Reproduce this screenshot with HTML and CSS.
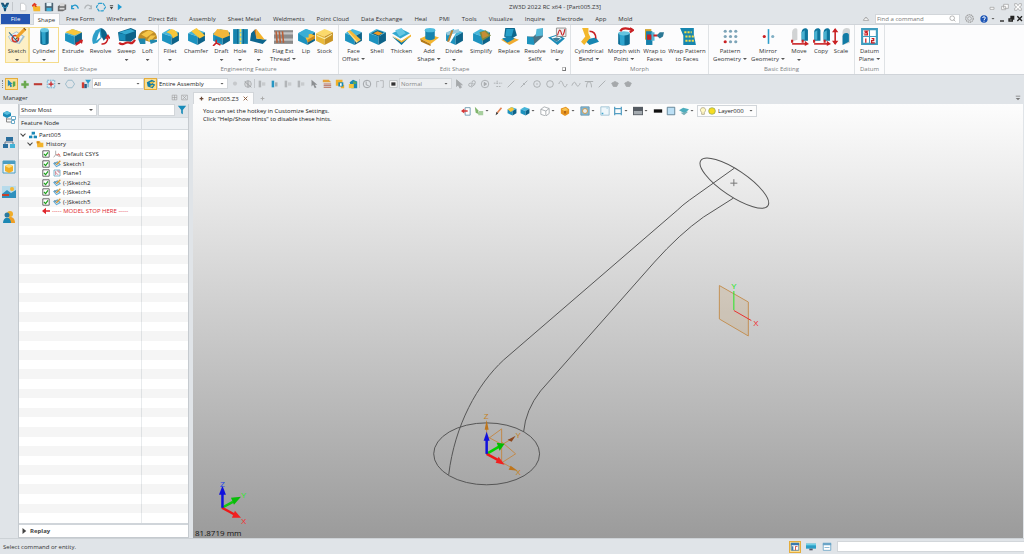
FILE: index.html
```html
<!DOCTYPE html>
<html lang="en">
<head>
<meta charset="utf-8">
<title>ZW3D 2022 RC x64 - [Part005.Z3]</title>
<link rel="stylesheet" href="styles.css">
</head>
<body>
<svg class="defs" aria-hidden="true">
  <symbol id="cube" viewBox="0 0 18 18"><path fill="#45b6da" d="M1 6 8 2l9 3-7 4z"/><path fill="#1c92bf" d="M1 6l9 3v8l-9-4z"/><path fill="#0d6389" d="M10 9l7-4v8l-7 4z"/></symbol>
  <symbol id="cursor" viewBox="0 0 12 12"><path d="M3 1v8l2-2 2 4 2-1-2-3h3z"/></symbol>
  <symbol id="check" viewBox="0 0 10 10"><path fill="#fff" stroke="#444" d="M1 1h8v8H1z"/><path fill="none" stroke="#1ba01b" stroke-width="1.500" d="M2.500 5l2 2 3-4"/></symbol>
  <symbol id="sk" viewBox="0 0 12 12"><path fill="#5fa9d4" d="M0 5l7-3 5 5-7 4z"/><path fill="#dceaf2" d="M3 6l4-2 2 3-4 2z"/><path stroke="#d99a35" stroke-width="2" d="M5 7l6-6"/><path stroke="#777" d="M2 3l3 4"/></symbol>
  <symbol id="block" viewBox="0 0 12 12"><path fill="#b2b5b8" d="M2 2h3v8H2z"/><path fill="#c8cbce" d="M6 4h4v4H6z"/></symbol>
</svg>

<header class="titlebar">
  <div class="quick">
    <button aria-label="Application"><svg viewBox="0 0 12 12"><path fill="#174f74" d="M1 1h3l2 3 2-3h3L9 6H3zM4 6h4l-1 5H5z"/><path fill="#2fa2ce" d="M2 2l3 4h2l3-4-2 5H4z"/></svg></button>
    <i class="sep"></i>
    <button aria-label="New"><svg viewBox="0 0 12 12"><path fill="#fff" stroke="#c3c7ca" d="M3 1.500h4l2.500 3v6H3z"/></svg></button>
    <button aria-label="Open"><svg viewBox="0 0 12 12"><path fill="#f5b82c" d="M2 4h4l1 1h4v6H3z"/><path fill="#e03a24" d="M1 4l3-3 3 2-1 1 1 2H5L4 4 2 6z"/></svg></button>
    <button aria-label="Save"><svg viewBox="0 0 12 12"><path fill="#4d6474" d="M1 1h10v10H1z"/><path fill="#e7f4fa" d="M3 1h6v4H3z"/><path fill="#41b2da" d="M3 7h6v4H3z"/></svg></button>
    <button aria-label="Print"><svg viewBox="0 0 12 12"><path fill="#6d6d6d" d="M1 5l3-2h7v6l-4 2H1z"/><path fill="#d9d9d9" d="M4 1h5v4H3zM3 7h6v2H3z"/></svg></button>
    <button aria-label="Undo"><svg viewBox="0 0 12 12"><path fill="none" stroke="#2498cc" stroke-width="1.500" d="M2 4v4h3M2 7c2-5 7-4 8 1"/></svg></button>
    <button aria-label="Redo"><svg viewBox="0 0 12 12"><path fill="none" stroke="#b3b7ba" stroke-width="1.500" d="M10 4v4H7M10 7C8 2 3 3 2 8"/></svg></button>
    <button aria-label="Regenerate"><svg viewBox="0 0 12 12"><path fill="none" stroke="#2e9fce" stroke-width="1.500" stroke-dasharray="4 1" d="M3.500 1.500h5l3 4.500-3 4.500h-5L.5 6z"/></svg></button>
    <button class="narrow" aria-label="Customize"><svg viewBox="0 0 6 12"><path fill="#444" d="M1 4h4v1H1zM1 6h4L3 9z"/></svg></button>
    <button class="narrow" aria-label="Play"><svg viewBox="0 0 6 12"><path fill="#1c9bd3" d="M1 2l5 4-5 4z"/></svg></button>
  </div>
  <h1 class="title">ZW3D 2022 RC x64 - [Part005.Z3]</h1>
  <div class="window">
    <button aria-label="Minimize"><svg viewBox="0 0 12 12"><path fill="#fff" stroke="#999" d="M3 6.500h6v3H3z"/></svg></button>
    <button aria-label="Restore"><svg viewBox="0 0 12 12"><path fill="#fff" stroke="#999" d="M4 2h7v6H4zM1 5h6v5H1z"/></svg></button>
    <button aria-label="Close"><svg viewBox="0 0 12 12"><path fill="#fff" stroke="#999" d="M1 1h3l2 3 2-3h3v3L8 6l3 2v3H8L6 8l-2 3H1V8l3-2-3-2z"/></svg></button>
  </div>
</header>

<nav class="tabs">
  <button class="file">File</button>
  <button class="active">Shape</button>
  <button>Free Form</button><button>Wireframe</button><button>Direct Edit</button><button>Assembly</button><button>Sheet Metal</button><button>Weldments</button><button>Point Cloud</button><button>Data Exchange</button><button>Heal</button><button>PMI</button><button>Tools</button><button>Visualize</button><button>Inquire</button><button>Electrode</button><button>App</button><button>Mold</button>
  <div class="finder">
    <button class="icon up" aria-label="Collapse ribbon"><svg viewBox="0 0 12 12"><path fill="#fff" stroke="#888" d="M2 8h8L8 5H7L6 3 5 5H4z"/></svg></button>
    <label class="search"><input type="text" placeholder="Find a command" aria-label="Find a command"><svg viewBox="0 0 12 12"><circle cx="5.500" cy="5.500" r="4" fill="none" stroke="#888"/><path stroke="#888" d="M8 8l3 3"/></svg></label>
    <button class="icon gear" aria-label="Settings"><svg viewBox="0 0 12 12"><circle cx="6" cy="6" r="5" fill="none" stroke="#999" stroke-width="1.500" stroke-dasharray="2 .7"/><circle cx="6" cy="6" r="2.500" fill="none" stroke="#999"/></svg></button>
    <button class="icon help" aria-label="Help"><svg viewBox="0 0 12 12"><circle cx="6" cy="6" r="5.500" fill="#1d55b5"/><path fill="none" stroke="#fff" stroke-width="1.500" d="M4 4.500c0-2.500 4-2.500 4 0C8 6 6 6 6 7.500M6 8.500v1.500"/></svg></button>
    <i class="caret"></i>
    <button class="icon" aria-label="Minimize document"><svg viewBox="0 0 12 12"><path fill="#222" d="M3 8h6v2H3z"/></svg></button>
    <button class="icon" aria-label="Restore document"><svg viewBox="0 0 12 12"><path fill="#222" d="M5 1h6v6H9v3H2V5h3zM4 7v1h3V7z" fill-rule="evenodd"/></svg></button>
    <button class="icon" aria-label="Close document"><svg viewBox="0 0 12 12"><path stroke="#222" stroke-width="2" d="M2 2l7 7M9 2L2 9"/></svg></button>
  </div>
</nav>

<main class="ribbon">
  <section class="group basic"><div class="tools">
    <button class="hot"><svg viewBox="0 0 18 18"><path fill="#9fbfd4" d="M0 9l8-5 8 5-5 7-8-2z"/><path fill="#eef4f8" d="M1 9l7-4 6 4-4 6-7-2z"/><circle cx="7" cy="11" r="3" fill="none" stroke="#d83a2b" stroke-width="1.500"/><path stroke="#2c6c94" d="M1 5l8 9"/><path stroke="#f0a32a" stroke-width="3" d="M8 10l8-8"/><path stroke="#7a4d16" d="M7 12l2-2M15 1l2 2"/></svg>Sketch<i class="caret"></i></button>
    <button class="warm"><svg viewBox="0 0 18 18"><path fill="#0e6d94" d="M5 3h8v12a4 2 0 0 1-8 0z"/><path fill="#2ea3cb" d="M6 3h4v13H7z"/><ellipse cx="9" cy="3" rx="4" ry="2" fill="#62c5e3"/></svg>Cylinder<i class="caret"></i></button>
    <button><svg viewBox="0 0 18 18"><use href="#cube"/><path fill="#f8c63a" d="M1 5l7-3 9 3-7 3z"/><path fill="#c92023" d="M11 15l4-2-1-1 4 0-1 4-1-1-5 3z"/></svg>Extrude</button>
    <button><svg viewBox="0 0 18 18"><path fill="#2e9fc9" d="M5 3l4-2 2 8-5 6-4 1c-2-4 0-10 3-13z"/><path fill="#0c648a" d="M9 1c5 1 7 6 6 9l-3 3-2-4z"/><path fill="#fff" d="M8 4l1 6-4 3z"/><path fill="none" stroke="#c92023" stroke-width="1.500" d="M10 16c4 1 6-3 6-6M14 11l2-3 2 3"/></svg>Revolve</button>
    <button><svg viewBox="0 0 18 18"><path fill="#0c6288" d="M1 5l12-4 5 2v7l-5 4-11-1z"/><path fill="#35a9d0" d="M2 5l11-3 4 2-9 3z"/><path fill="#198cb9" d="M2 6l6 1v6l-6-1z"/><path fill="none" stroke="#c92023" stroke-width="2" d="M2 15c5 4 5-2 10 0 2 1 4-1 5-3"/></svg>Sweep<i class="caret"></i></button>
    <button><svg viewBox="0 0 18 18"><path fill="#c08d27" d="M0 11c1-7 6-9 12-8 4 1 6 4 6 8l-7 3z"/><path fill="#f4c446" d="M3 7l7-4 5 2-7 5zM9 12l3-4 5 0-6 6z"/><path fill="#2088ad" d="M0 11h7v5H2zM11 12h7v2l-6 2z"/></svg>Loft<i class="caret"></i></button>
  </div><h2>Basic Shape</h2></section>

  <section class="group engineering"><div class="tools">
    <button><svg viewBox="0 0 18 18"><use href="#cube"/><path fill="#f8c63a" d="M5 5l5-3c4 1 6 3 6 6l-5 3c0-3-2-5-6-6z"/></svg>Fillet<i class="caret"></i></button>
    <button><svg viewBox="0 0 18 18"><use href="#cube"/><path fill="#f8c63a" d="M4 4l5-3 8 7-5 3z"/></svg>Chamfer</button>
    <button><svg viewBox="0 0 18 18"><use href="#cube"/><path fill="#f3b63b" d="M1 7l4-5 10 1 2 5-7 3z"/><path fill="#1a83ad" d="M3 9l6 2v3l-6-2z"/><path fill="none" stroke="#c92023" stroke-width="1.500" d="M4 12v3l-3 3M4 15l4 2"/></svg>Draft<i class="caret"></i></button>
    <button><svg viewBox="0 0 18 18"><path fill="#1684af" d="M2 2h14v14H2z"/><path fill="#53b9d9" d="M7 2h4v14H7z"/><path stroke="#f8dc54" stroke-width="1.500" d="M9 2v14" stroke-dasharray="3 1"/><path stroke="#0c5e82" d="M6.500 2v14M11.500 2v14"/></svg>Hole<i class="caret"></i></button>
    <button><svg viewBox="0 0 18 18"><path fill="#0d668e" d="M2 6l4-4 1 9 10 1-4 4-12-3z"/><path fill="#f4b22a" d="M7 2l8 10-8-1z"/><path fill="#d17a19" d="M5 3l2-1v9z"/></svg>Rib<i class="caret"></i></button>
    <button><svg viewBox="0 0 18 18"><path fill="#8b8b8b" d="M0 3h18v13H0z"/><path stroke="#c4c4c4" stroke-width="2" d="M0 6h18M0 12h18"/><path stroke="#b96038" stroke-width="1.500" d="M2 4l1 11M5 4l1 11M8 4l1 11"/></svg>Flag Ext<span>Thread<i class="caret"></i></span></button>
    <button><svg viewBox="0 0 18 18"><use href="#cube"/><path fill="#f8bf39" d="M7 8l5-2 5 2v3l-7 3z"/><path fill="#c98a20" d="M10 12l7-4v3l-7 4z"/><path fill="#39aed5" d="M1 6l8-4 8 3-6 2v3H7z"/></svg>Lip</button>
    <button><svg viewBox="0 0 18 18"><path fill="#fbd96b" d="M1 6l8-4 8 3-8 4z"/><path fill="#e9b93a" d="M1 6l8 3v8l-8-4z"/><path fill="#c99424" d="M9 9l8-4v8l-8 4z"/><path fill="none" stroke="#f8edae" d="M2 8l7 3 7-4"/></svg>Stock</button>
  </div><h2>Engineering Feature</h2></section>

  <section class="group edit"><div class="tools">
    <button><svg viewBox="0 0 18 18"><use href="#cube"/><path fill="#f4b938" d="M3 4l3-1 10 9-4 3z"/><path fill="#ffe191" d="M3 4l1 0 9 10-1 1z"/></svg>Face<span>Offset<i class="caret"></i></span></button>
    <button><svg viewBox="0 0 18 18"><use href="#cube"/><path fill="#0b5f85" d="M3 6l6-3 6 2-5 4z"/><path fill="#ef9b22" d="M5 6l4-2 5 2-4 2z"/></svg>Shell</button>
    <button><svg viewBox="0 0 18 18"><path fill="#0c759f" d="M0 9l9 5 9-6-9 9z"/><path fill="#f6b52e" d="M0 8l9 5 9-6v2l-9 6z"/><path fill="#33a8cf" d="M0 6l9-4 8 4-9 5z"/><path fill="#65c6e3" d="M3 3l6-2 4 5-6 3z"/></svg>Thicken</button>
    <button><svg viewBox="0 0 18 18"><path fill="#f4b52f" d="M0 11l9-4 9 3-8 6z"/><path fill="#b57a16" d="M0 11l10 5v2L1 14z"/><path fill="#1683ae" d="M5 2h9v9c-2 2-7 2-9 0z"/><ellipse cx="9.500" cy="3" rx="5" ry="2" fill="#4ebbdd"/></svg>Add<span>Shape<i class="caret"></i></span></button>
    <button><svg viewBox="0 0 18 18"><use href="#cube"/><path fill="#fff" d="M9 2l3 1-7 12-2-1z"/><path fill="#96c9dd" d="M1 5l12-3 1 3-12 3z"/><path fill="#c08534" d="M6 3h2L4 14H2z"/></svg>Divide<i class="caret"></i></button>
    <button><svg viewBox="0 0 18 18"><use href="#cube"/><path fill="#7b8c42" d="M7 5l6-2 5 5-8 5z"/><path fill="#c58d35" d="M9 5l3-1 4 4-6 3z"/></svg>Simplify</button>
    <button><svg viewBox="0 0 18 18"><path fill="#f0ac31" d="M1 12l8-3 9 3-9 5z"/><path fill="#0e678c" d="M5 1h9l2 7-7 4-5-3z"/><path fill="#279fc9" d="M6 2h7l-2 7H5z"/><path fill="#1684af" d="M2 11l7-2 5 2-7 4z"/></svg>Replace</button>
    <button><svg viewBox="0 0 18 18"><path fill="#4a7284" d="M1 9h6l9-8v8l-8 7H1z"/><path fill="#1d94bf" d="M1 9l6 1 1 7-7-1z"/><path fill="#54b8d8" d="M10 2l6-1v7l-7 1z"/></svg>Resolve<span>SelfX</span></button>
    <button><svg viewBox="0 0 18 18"><path fill="#1b8bb7" d="M0 10l9-3 7 4-7 6z"/><path fill="#fff" d="M3 10l6-2 4 3-5 3z"/><path fill="#3d7e99" d="M4 11l4 3 4-3-4-1z"/><path fill="#eee" stroke="#777" stroke-width=".7" d="M8 1h9v8H8z"/><path fill="none" stroke="#c92023" d="M9 8c2-8 3-5 4-1 1 2 2 0 3-5"/></svg>Inlay<i class="caret"></i></button>
  </div><h2>Edit Shape</h2><i class="launch"></i></section>

  <section class="group morph"><div class="tools">
    <button><svg viewBox="0 0 18 18"><path fill="#1686b2" d="M4 12l11-2 3 4-9 3z"/><path fill="#f3b72c" d="M2 1h6v5l2 4-6 7-3-3 4-5z"/><path fill="none" stroke="#c92023" stroke-width="1.500" d="M9 4c4 0 6 3 6 7"/></svg>Cylindrical<span>Bend <i class="caret"></i></span></button>
    <button><svg viewBox="0 0 18 18"><path fill="#0d6d95" d="M3 6h11v10c-3 2-8 2-11 0z"/><path fill="#2fa5cf" d="M4 6h5v11H5z"/><ellipse cx="8.500" cy="6" rx="5.500" ry="2" fill="#64c4df"/><path fill="none" stroke="#c92023" stroke-width="2" d="M5 4c2-4 7-3 12-1M14 1l3 2-3 2"/></svg>Morph with<span>Point <i class="caret"></i></span></button>
    <button><svg viewBox="0 0 18 18"><path fill="#d0a32c" d="M0 2h6v10H0z"/><path fill="#1580ab" d="M1 4h6v13H1z"/><path fill="#55b6d5" d="M6 5h3v8H6z"/><path fill="#c92023" d="M2 7h4v5H2zM8 7h4v2H8z"/><path fill="#2b7895" d="M11 8l3-3h4l-1 4-3 2z"/></svg>Wrap to<span>Faces</span></button>
    <button><svg viewBox="0 0 18 18"><path fill="#1686af" d="M2 1h13v6l2 10H5V8z"/><path stroke="#f2dc4a" stroke-width="2" stroke-dasharray="2 1" d="M6 5h7M7 9h8M7 13h8"/></svg>Wrap Pattern<span>to Faces</span></button>
  </div><h2>Morph</h2></section>

  <section class="group editing"><div class="tools">
    <button><svg viewBox="0 0 18 18"><g fill="#7da4b8"><circle cx="4" cy="4" r="1.500"/><circle cx="9" cy="4" r="1.500"/><circle cx="14" cy="4" r="1.500"/><circle cx="4" cy="9" r="1.500"/><circle cx="9" cy="9" r="1.500"/><circle cx="14" cy="9" r="1.500"/><circle cx="9" cy="14" r="1.500"/><circle cx="14" cy="14" r="1.500"/></g><circle cx="4" cy="14" r="1.500" fill="#c92023"/></svg>Pattern<span>Geometry<i class="caret"></i></span></button>
    <button><svg viewBox="0 0 18 18"><path stroke="#2d9cca" stroke-width="1.500" d="M9 2v14"/><circle cx="5" cy="9" r="1.500" fill="#c92023"/><circle cx="13" cy="9" r="1.500" fill="#80afc4"/></svg>Mirror<span>Geometry<i class="caret"></i></span></button>
    <button><svg viewBox="0 0 18 18"><path fill="#d1d3d4" d="M2 5c0-4 5-5 5-2v9l-5 2z"/><path fill="#0e759d" d="M11 5c0-4 5-5 6-2v10h-6z"/><path fill="#49b0d0" d="M11 5l3-2v9h-3z"/><path stroke="#c92023" stroke-width="1.500" d="M2 16h13"/><path fill="#c92023" d="M14 13l4 3-4 2zM1 12h2v3H1zM11 12h2v3h-2z"/></svg>Move<i class="caret"></i></button>
    <button><svg viewBox="0 0 18 18"><path fill="#0e759d" d="M2 5c0-4 5-5 6-2v10H2zM11 5c0-4 5-5 6-2v10h-6z"/><path fill="#49b0d0" d="M2 5l3-2v9H2zM11 5l3-2v9h-3z"/><path stroke="#c92023" stroke-width="1.500" d="M2 16h13"/><path fill="#c92023" d="M14 13l4 3-4 2zM1 12h2v3H1zM11 12h2v3h-2z"/></svg>Copy</button>
    <button><svg viewBox="0 0 18 18"><path stroke="#c92023" stroke-width="1.500" d="M3 2v14"/><path fill="#c92023" d="M0 5l3-4 3 4zM0 13l3 4 3-4z"/><path fill="#d2d4d5" d="M10 5c0-5 7-5 7-2v12l-7 2z"/><path fill="#117ba5" d="M10 9c0-4 5-4 6-2v7l-6 3z"/></svg>Scale</button>
  </div><h2>Basic Editing</h2></section>

  <section class="group datum"><div class="tools">
    <button><svg viewBox="0 0 18 18"><path fill="#fff" stroke="#3f9cbf" stroke-width="2" d="M2 2h14v14H2z"/><path fill="none" stroke="#3f9cbf" d="M9 2v7h7M9 9H2M9 9v7"/><path fill="none" stroke="#c92023" stroke-width="1.200" d="M4 4h3L5 5.500h2v2H4M5.500 11v4M11 11h2v2h-2v2h3"/></svg>Datum<span>Plane<i class="caret"></i></span></button>
  </div><h2>Datum</h2></section>
</main>

<div class="selectbar">
  <i class="grip"></i>
  <button class="on" aria-label="Pick"><svg viewBox="0 0 12 12"><path fill="#2588b5" d="M1 1v8l2-2 1 3 2-1-1-3h2z"/><path fill="#58a84c" d="M7 3h3v5l-3 2z"/></svg></button>
  <button aria-label="Add"><svg viewBox="0 0 12 12"><path fill="#6aa84f" d="M4.500 2h3v3h3v3h-3v3h-3V8h-3V5h3z"/></svg></button>
  <button aria-label="Remove"><svg viewBox="0 0 12 12"><path fill="#bd3a33" d="M1 5h10v2.500H1z"/></svg></button>
  <button aria-label="Window pick"><svg viewBox="0 0 12 12"><path fill="#d7ebf5" stroke="#5da5c8" stroke-dasharray="2 1" d="M1.500 1.500h9v9h-9z"/><path stroke="#c92023" stroke-width="1.500" d="M6 3v6M3 6h6"/></svg></button>
  <i class="caret"></i>
  <button class="hexa" aria-label="Polygon pick"><svg viewBox="0 0 12 12"><path fill="none" stroke="#93b6c7" d="M3.500 1.500h5l3 4.500-3 4.500h-5L.5 6z"/></svg></button>
  <button aria-label="Filter"><svg viewBox="0 0 12 12"><path fill="#d53b30" d="M1 4h3v7H1z"/><path fill="#2d5c84" d="M4 6h3v5H4z"/><path fill="#2a9bc9" d="M5 1h7L9 5v5H8V5z"/></svg></button>
  <span class="pick all"><select aria-label="Entity filter"><option>All</option></select></span>
  <button class="on" aria-label="Assembly scope"><svg viewBox="0 0 12 12"><path fill="#147ea9" d="M1 4l6-3 4 2-3 2 3 2-3 4-6-2z"/><path fill="#f5c23e" d="M4 4l4-1 2 1-4 2zM5 8l3-1 1 1-3 2z"/></svg></button>
  <span class="pick scope"><select aria-label="Scope"><option>Entire Assembly</option></select></span>
  <button aria-label="Pick last"><svg viewBox="0 0 12 12"><circle cx="6" cy="5.500" r="2.500" fill="#c6c9cc"/></svg></button>
  <button aria-label="Hide pick"><svg viewBox="0 0 12 12"><circle cx="6" cy="6" r="4" fill="#d5d7d9" stroke="#a9adb0"/><path stroke="#989b9e" d="M2 3l8 7M6 2v8"/></svg></button>
  <i class="sep"></i>
  <button aria-label="Align 1"><svg><use href="#block"/></svg></button>
  <button aria-label="Align 2"><svg viewBox="0 0 12 12"><path fill="#2796c3" d="M2 2h3v8H2z"/><path fill="#aab0b4" d="M6 4h3v5H6z"/></svg></button>
  <button aria-label="Align 3"><svg><use href="#block"/></svg></button>
  <button aria-label="Align 4"><svg><use href="#block"/></svg></button>
  <button aria-label="Cursor"><svg fill="#8b8e91"><use href="#cursor"/></svg></button>
  <button aria-label="List"><svg viewBox="0 0 12 12"><path fill="#e5a33b" d="M1 1h7l3 3H1z"/><path stroke="#b25a45" d="M2 6h9M2 8h9M2 10h9"/></svg></button>
  <button aria-label="Copy item"><svg viewBox="0 0 12 12"><path fill="#f0b02a" d="M1 1h8v7H1zM7 7h4v4H7z"/><path fill="#1a8ab5" d="M4 4h6v5H4z"/><path fill="#fff" d="M6 5h2v3H6z"/></svg></button>
  <button aria-label="Manage items"><svg viewBox="0 0 12 12"><path fill="#1a8ab5" d="M2 4l4-3 5 2v8H4z"/><path fill="#f3c33a" d="M1 6h6v5H1z"/><path fill="#58a95d" d="M6 3h4v3H6z"/></svg></button>
  <i class="sep"></i>
  <button aria-label="Clock"><svg viewBox="0 0 12 12"><circle cx="6" cy="6" r="4.500" fill="none" stroke="#95999c"/><path fill="none" stroke="#95999c" d="M5 3v4l3 1"/></svg></button>
  <button aria-label="Marks"><svg viewBox="0 0 12 12"><path fill="none" stroke="#b0b3b6" d="M2 10V3h3M6 2h4v8H8"/></svg></button>
  <button aria-label="Display"><svg viewBox="0 0 12 12"><path fill="#fff" stroke="#b5b8ba" d="M2 2h9v8H2z"/><path fill="#333" d="M4 4h5v4H4z"/></svg></button>
  <span class="pick normal"><select aria-label="Snap mode" disabled><option>Normal</option></select></span>
  <div class="snaps">
    <button disabled aria-label="Snap cursor"><svg class="solid"><use href="#cursor"/></svg></button>
    <button disabled aria-label="Snap link"><svg viewBox="0 0 12 12"><circle cx="4" cy="7" r="2"/><circle cx="8" cy="4" r="2"/><path d="M5 10l5-4"/></svg></button>
    <button disabled aria-label="Snap play"><svg viewBox="0 0 12 12"><circle cx="6" cy="6" r="4.500"/><path class="solid" d="M5 4l3 2-3 2z"/></svg></button>
    <button disabled aria-label="Snap points"><svg viewBox="0 0 12 12"><path stroke-dasharray="2 1" d="M1 5h10M5 2v4M4 9h6"/></svg></button>
    <button disabled aria-label="Snap line"><svg viewBox="0 0 12 12"><path d="M2 10l8-8"/></svg></button>
    <button disabled aria-label="Snap mid"><svg viewBox="0 0 12 12"><path d="M2 10l8-8M5 5l2 2"/></svg></button>
    <button disabled aria-label="Snap center"><svg viewBox="0 0 12 12"><circle cx="6" cy="6" r="4"/><path d="M5 6h2"/></svg></button>
    <button disabled aria-label="Snap circle"><svg viewBox="0 0 12 12"><circle cx="6" cy="6" r="4"/></svg></button>
    <button disabled aria-label="Snap curve"><svg viewBox="0 0 12 12"><path d="M1 6c2-6 4-3 5 0s3 6 5 0"/></svg></button>
    <button disabled aria-label="Snap wave"><svg viewBox="0 0 12 12"><path d="M1 8c2-5 4-5 5-2s3 4 5-1"/></svg></button>
    <button disabled aria-label="Snap tangent"><svg viewBox="0 0 12 12"><path d="M1 3h10M3 10c0-9 6-9 6 0"/></svg></button>
    <button disabled aria-label="Snap end"><svg viewBox="0 0 12 12"><path d="M2 10l8-8"/></svg></button>
    <button disabled aria-label="Snap shape"><svg viewBox="0 0 12 12"><path class="solid" d="M2 5l4-2 4 2-2 4H4z"/></svg></button>
    <button disabled aria-label="Snap body"><svg viewBox="0 0 12 12"><path class="solid" d="M2 5l4-2 4 2-2 4H4z"/></svg></button>
  </div>
</div>

<div class="workspace">
  <aside class="manager">
    <header class="panelhead"><h2>Manager</h2>
      <button aria-label="Dock"><svg viewBox="0 0 12 12"><path fill="none" stroke="#999" d="M2 2h8v8H2zM2 6h8M6 2v8"/></svg></button>
      <button aria-label="Close panel"><svg viewBox="0 0 12 12"><path fill="none" stroke="#999" d="M1 2h10v8H1zM3 3l6 6M9 3L3 9"/></svg></button>
    </header>
    <div class="panelbody">
      <nav class="rail">
        <button class="current" aria-label="History manager"><svg viewBox="0 0 14 14"><path fill="#188bb9" d="M1 3l4-2 4 2v3l-4 2-4-2z"/><path fill="#58bddc" d="M1 3l4-2 4 2-4 2z"/><path fill="none" stroke="#888" d="M4.500 8v4H9M5 9h5"/><path fill="#fff" stroke="#6aa9c7" d="M9.500 6.500h4v3h-4zM9.500 10.500h3v3h-3z"/></svg></button>
        <button aria-label="Assembly manager"><svg viewBox="0 0 14 14"><path fill="#2a6e9d" d="M4 2h7v4H4zM1 9h5v4H1z"/><path fill="#43b2d7" d="M8 9h5v4H8z"/><path fill="none" stroke="#678" d="M3 9V7h8v2"/></svg></button>
        <button aria-label="View manager"><svg viewBox="0 0 14 14"><path fill="#e8f3f8" stroke="#4a9dc2" d="M1 1h12v12H1z"/><path fill="#4a9dc2" d="M1 1h12v3H1z"/><path fill="#f1af25" d="M3 6l4-2 4 2v5l-4 2-4-2z"/><path fill="#ffde78" d="M3 6l4-2 4 2-4 2z"/></svg></button>
        <button aria-label="Visual manager"><svg viewBox="0 0 14 14"><path fill="#2f90bd" d="M0 1h14v12H0z"/><path fill="#b7dbeb" d="M0 1h14v4L9 8 5 5 0 9z"/><path fill="#f2b633" d="M8 4a2 2 0 1 1 4 0 2 2 0 0 1-4 0z"/><path fill="#c7412d" d="M0 9h7v2H0z"/></svg></button>
        <button aria-label="Role manager"><svg viewBox="0 0 14 14"><circle cx="8" cy="4" r="3" fill="#f0ad2a"/><path fill="#ee9e25" d="M4 13c0-8 9-8 9 0z"/><circle cx="5" cy="5" r="2.500" fill="#2a7aa0"/><path fill="#1c88b4" d="M1 13c0-7 8-7 8 0z"/></svg></button>
      </nav>
      <div class="panel">
        <div class="filterrow">
          <span class="pick show"><select aria-label="Show"><option>Show Most</option></select></span>
          <input type="text" aria-label="Filter features">
          <button aria-label="Apply filter"><svg viewBox="0 0 12 12"><path fill="#178bb9" d="M1 1h10L7 6v5L5 10V6z"/></svg></button>
        </div>
        <div class="treehead"><span>Feature Node</span></div>
        <ul class="tree">
          <li class="l0"><i class="twist"></i><svg viewBox="0 0 12 12"><path fill="#1c89b7" d="M4 1h5v4H4zM0 7h5v4H0zM7 7h5v4H7z"/><path stroke="#1c89b7" d="M3 7l3-3 3 3" fill="none"/></svg>Part005</li>
          <li class="l1"><i class="twist"></i><svg viewBox="0 0 12 12"><path fill="#f3b42c" d="M1 2h5l1 2h4v7H2z"/><path fill="#d98a17" d="M1 2h4v3H1z"/></svg>History</li>
          <li class="l2"><svg><use href="#check"/></svg><svg viewBox="0 0 12 12"><path fill="none" stroke="#888" d="M4 1v6l-3 4M4 7l6 3"/><path fill="none" stroke="#d14a43" d="M5 7h5M8 5l3 5"/></svg>Default CSYS</li>
          <li class="l2"><svg><use href="#check"/></svg><svg><use href="#sk"/></svg>Sketch1</li>
          <li class="l2"><svg><use href="#check"/></svg><svg viewBox="0 0 12 12"><path fill="#fff" stroke="#4792b4" d="M1.500 1.500h9v9h-9z"/><path fill="none" stroke="#b56" d="M4 3v6M4 5l4 4M6 3h3v3"/></svg>Plane1</li>
          <li class="l2"><svg><use href="#check"/></svg><svg><use href="#sk"/></svg>(-)Sketch2</li>
          <li class="l2"><svg><use href="#check"/></svg><svg><use href="#sk"/></svg>(-)Sketch4</li>
          <li class="l2"><svg><use href="#check"/></svg><svg><use href="#sk"/></svg>(-)Sketch5</li>
          <li class="l2 stop"><svg viewBox="0 0 10 10"><path fill="#e0262c" d="M0 5l5-4v3h5v2H5v3z"/></svg>----- MODEL STOP HERE -----</li>
          <li></li><li></li><li></li><li></li><li></li><li></li><li></li><li></li><li></li><li></li><li></li><li></li><li></li><li></li><li></li><li></li><li></li><li></li><li></li><li></li><li></li><li></li><li></li><li></li><li></li><li></li><li></li><li></li><li></li><li></li><li></li><li></li>
        </ul>
        <button class="replay"><svg viewBox="0 0 8 8"><path fill="#444" d="M2 0l5 4-5 4z"/></svg>Replay</button>
      </div>
    </div>
  </aside>

  <section class="document">
    <div class="doctabs">
      <button class="doctab"><svg viewBox="0 0 8 8"><path stroke="#6b4a38" stroke-width="2" d="M4 1v6M1 4h6"/></svg>Part005.Z3<svg viewBox="0 0 8 8"><path stroke="#8a5a3a" stroke-width="1.500" d="M1 1l6 6M7 1L1 7"/></svg></button>
      <button class="newtab" aria-label="New document"><svg viewBox="0 0 8 8"><path stroke="#aaa" stroke-width="1.500" d="M4 1v6M1 4h6"/></svg></button>
      <button class="more" aria-label="Document list"><svg viewBox="0 0 8 8"><path fill="#777" d="M1 1h6v1H1zM1 4h6L4 7z"/></svg></button>
    </div>
    <div class="viewport">
      <svg class="scene" viewBox="193 104 831 434" preserveAspectRatio="xMidYMid meet">
        <g fill="none" stroke="#555" stroke-width="1">
          <ellipse cx="735" cy="183" rx="40.500" ry="13" transform="rotate(34 735 183)"/>
          <ellipse cx="487" cy="454" rx="53" ry="31"/>
          <path d="M735 168L690 200Q683 205 678 210L504 360C478 384 455 425 449 475"/>
          <path d="M734 198L704 217Q680 234 655 262L541 391Q526 410 524 432"/>
          <path stroke="#777" d="M731 183h7M734.500 179v7"/>
        </g>
        <path fill="#c79a5c" fill-opacity=".2" stroke="#c39155" d="M720 285.500l29 16.500v34l-29-17z"/>
        <path stroke="#25e825" d="M734.500 310v-19"/><path stroke="#e83030" d="M734.500 310.500l17.500 10"/>
        <g class="axis"><text x="732" y="289" fill="#25e825">Y</text><text x="754" y="326" fill="#f03030">X</text></g>
        <g fill="none" stroke="#c28a4b"><path d="M487 440l15-11v33M502 442l14 12-14 9M488 437l15 8M487 454l27 15M487 454l25-15M487 454v-26"/></g>
        <path fill="#bd751c" d="M485 430l2-10 2 10zM511 466l7 5-9-1z"/><path fill="#8d481f" d="M508 440l8-4-4 6z"/>
        <g class="axis" fill="#c58223"><text x="484" y="419">Z</text><text x="516" y="438">Y</text><text x="516" y="475">X</text></g>
        <path stroke="#00d300" stroke-width="2.500" d="M487 454l12-7"/><path fill="#00bd00" d="M497 443l8 1-5 7z"/><path stroke="#ee1818" stroke-width="2.500" d="M487 454l13 7"/><path fill="#f12020" d="M499 457l6 8-9-2z"/><path stroke="#1111dd" stroke-width="2.500" d="M487 454v-14"/><path fill="#1111dd" d="M484 441l3-9 3 9z"/>
        <path stroke="#10c810" stroke-width="2.500" d="M222 508l11-6"/><path fill="#08bd08" d="M231 498l10-1-7 8z"/><path stroke="#ee1818" stroke-width="2.500" d="M222 508l13 7"/><path fill="#f12020" d="M235 511l6 7-9 0z"/><path stroke="#1111dd" stroke-width="2.500" d="M222.500 508v-15"/><path fill="#1111dd" d="M219 495l3.500-9 3.500 9z"/>
        <g class="axis"><text x="220" y="487" fill="#2546e8">Z</text><text x="241" y="498" fill="#2ee82e">Y</text><text x="241" y="524" fill="#f03030">X</text></g>
      </svg>
      <p class="hint">You can set the hotkey in Customize Settings.<br>Click "Help/Show Hints" to disable these hints.</p>
      <div class="viewtools">
        <button aria-label="Exit"><svg viewBox="0 0 12 12"><path fill="#fff" stroke="#6392aa" d="M5 2h6v9H5z"/><path fill="#d53535" d="M0 6l4-3v2h4v2H4v2z"/></svg></button>
        <button aria-label="Display axes"><svg viewBox="0 0 12 12"><path fill="#80b56c" d="M1 1l4 4 1 5-4-2z"/><path fill="#a8cf9f" d="M6 6h5v5H5z"/></svg></button><i class="caret"></i>
        <button aria-label="Brush"><svg viewBox="0 0 12 12"><path stroke="#e08050" stroke-width="2" d="M4 8l5-6"/><path fill="#333" d="M2 11l1-4 2 2z"/></svg></button>
        <button aria-label="Shade faces"><svg viewBox="0 0 18 18"><use href="#cube"/><path fill="#f8c63a" d="M1 6l8-4 4 4-6 5z"/></svg></button>
        <button aria-label="Shaded"><svg><use href="#cube"/></svg></button><i class="caret"></i>
        <button aria-label="Wireframe"><svg viewBox="0 0 12 12"><path fill="#fff" stroke="#a0a5a8" d="M1 4l4-3 6 2v6l-4 3-6-2zM1 4l6 2 4-3M7 6v5"/></svg></button><i class="caret"></i>
        <button aria-label="Orientation"><svg viewBox="0 0 12 12"><path fill="#e69420" d="M1 3l6-2 4 3v5l-5 3-5-3z"/><path fill="#f9c652" d="M2 4l5-2 3 3-5 1z"/><path fill="#a95e15" d="M5 6h2v3H5z"/></svg></button><i class="caret"></i>
        <button aria-label="Zoom"><svg viewBox="0 0 12 12"><path fill="#82b7d2" stroke="#6696ae" d="M1 1h10v10H1z"/><circle cx="6" cy="6" r="3" fill="#e7edf0" stroke="#d9902f"/></svg></button><i class="caret"></i>
        <button aria-label="Fit"><svg viewBox="0 0 12 12"><path fill="#eff7fb" stroke="#98bdcf" d="M1 1h10v10H1z"/><path fill="#3fa5cf" d="M2 8h2v2H2zM8 2h1v1H8z"/></svg></button>
        <button aria-label="Section"><svg viewBox="0 0 12 12"><path fill="none" stroke="#559ec2" stroke-width="1.500" d="M2 1v10M10 1v10M2 3h8M2 9h8"/></svg></button><i class="caret"></i>
        <button aria-label="Background"><svg viewBox="0 0 12 12"><path fill="#555b62" d="M0 1h12v10H0z"/><path fill="#a5abb0" d="M1 6h10v4H1z"/></svg></button><i class="caret"></i>
        <button aria-label="Line colour"><svg viewBox="0 0 12 12"><path fill="#111" d="M1 4h10v4H1z"/></svg></button>
        <button aria-label="Fill colour"><svg viewBox="0 0 12 12"><path fill="#bde0f5" stroke="#56778a" d="M1.500 1.500h9v9h-9z"/></svg></button>
        <button aria-label="Layers"><svg viewBox="0 0 12 12"><path fill="#4dadbd" d="M0 5l5-3 7 2-5 5z"/><path fill="#78aeb7" d="M2 8l4 3 5-4z"/></svg></button><i class="caret"></i>
        <label class="layer"><svg viewBox="0 0 12 12"><path fill="#fff8c5" stroke="#9c916c" d="M4 8C0 4 3 1 6 1s6 3 2 7v3H4z"/></svg><svg viewBox="0 0 12 12"><circle cx="6" cy="6" r="5" fill="#f6dc22" stroke="#8aa05b"/></svg><span class="pick"><select aria-label="Layer"><option>Layer000</option></select></span></label>
      </div>
      <output class="measure">81.8719 mm</output>
    </div>
  </section>
</div>

<footer class="status">
  <span>Select command or entity.</span>
  <button class="on" aria-label="Manager toggle"><svg viewBox="0 0 12 12"><path fill="#fff" stroke="#557d99" d="M1.500 2h9v8h-9z"/><path fill="#3b79b0" d="M1 1h10v3H1zM2 5h2v5H2z"/><path fill="#c94036" d="M6 5h3v1H7v4H6z"/></svg></button>
  <button aria-label="Monitor"><svg viewBox="0 0 12 12"><path fill="#2b9dc6" d="M0 2h12v6H0z"/><path fill="#70d0e7" d="M0 2h12v2H0z"/><path fill="#556" d="M4 8h4v2H4z"/></svg></button>
  <button aria-label="Output"><svg viewBox="0 0 12 12"><path fill="#fff" stroke="#6aa4c7" d="M1.500 2h9v8h-9z"/><path fill="#6aa4c7" d="M1 1h10v3H1zM3 6h6v1H3z"/></svg></button>
  <input type="text" aria-label="Command output" readonly>
</footer>
</body>
</html>
```
FILE: styles.css
```css
* { box-sizing: border-box; }
body {
  margin: 0; min-height: 100vh; display: flex; flex-direction: column;
  background: #e0e4e8; color: #333;
  font: 6px/8px "Open Sans", "Noto Sans", sans-serif;
}
button, input, select { font: inherit; color: inherit; margin: 0; padding: 0; border: 0; border-radius: 0; background: none; }
button { display: flex; align-items: center; justify-content: center; white-space: nowrap; }
h1, h2, p, ul { margin: 0; padding: 0; font: inherit; list-style: none; }
svg { display: block; flex: none; }
.defs { position: absolute; width: 0; height: 0; }
.caret { width: 4px; height: 2px; flex: none; background: #555; clip-path: polygon(0 0, 100% 0, 50% 100%); }
.sep { width: 1px; height: 9px; background: #c3c7cb; flex: none; }

.titlebar { height: 13px; display: flex; align-items: center; }
.quick { display: flex; align-items: center; width: 125px; }
.quick button { width: 13px; }
.quick button svg { width: 10px; height: 10px; }
.quick .sep { margin: 0 3px; }
.quick .narrow { width: 8px; }
.quick .narrow svg { width: 5px; }
.quick button:first-child { width: 9px; }
.title { flex: 1; text-align: center; }
.window { display: flex; width: 39px; }
.window button { width: 13px; }
.window svg { width: 8px; height: 8px; }

.tabs { display: flex; height: 12px; align-items: stretch; border-bottom: 1px solid #d0d4d9; }
.tabs > button { padding: 1px 6px 0; }
.tabs .file { width: 29px; margin: 1px 3px 0 1px; padding-top: 0; background: #2455b0; color: #fff; }
.tabs .active { width: 27px; background: #fcfcfd; border: 1px solid #d0d4d9; border-bottom: 0; margin-bottom: -1px; }
.finder { margin-left: auto; display: flex; align-items: center; }
.finder svg { width: 7px; height: 7px; }
.finder .icon { width: 9px; }
.finder .icon svg { width: 8px; height: 8px; }
.finder .up, .finder .gear { width: 18px; }
.finder .gear svg { width: 9px; height: 9px; }
.finder .help { width: 12px; }
.finder .caret { margin: 0 2px 0 1px; }
.search { display: flex; align-items: center; width: 85px; height: 10px; background: #fff; border: 1px solid #d2d6da; padding: 0 3px 0 1px; }
.search input { flex: 1; min-width: 0; outline: 0; }
.search input::placeholder { color: #777; opacity: 1; }

.ribbon { display: flex; height: 50px; background: #fcfcfd; border-bottom: 1px solid #d0d4d9; }
.group { position: relative; display: flex; flex-direction: column; justify-content: space-between; border-right: 1px solid #dfe2e5; }
.tools { display: grid; padding: 2px 2px 0; height: 38px; }
.tools button { flex-direction: column; justify-content: flex-start; }
.tools svg { width: 19px; height: 19px; margin-bottom: 1px; }
.tools button > .caret { margin-top: 4px; }
.tools span { display: flex; align-items: center; gap: 2px; }
.group h2 { text-align: center; color: #7a7d80; padding-bottom: 1px; }
.basic { padding-left: 3px; }
.basic .tools { grid-template-columns: 24px 30px 28px 27px 25px 17px; }
.engineering .tools { grid-template-columns: 18px 34px 17px 20px 17px 32px 14px 23px; }
.edit .tools { grid-template-columns: 25px 22px 27px 28px 22px 32px 24px 28px 16px; padding-right: 5px; }
.morph .tools { grid-template-columns: 34px 36px 25px 40px; padding: 2px 1px 0; }
.editing .tools { grid-template-columns: 36px 40px 22px 22px 18px; padding: 2px 4px 0 3px; }
.datum .tools { grid-template-columns: 25px; }
.tools .hot, .tools .warm { box-shadow: inset 0 0 0 1px #f5dc8c; }
.tools .hot { background: #fdf0c6; }
.launch { position: absolute; right: 4px; bottom: 3px; width: 4px; height: 4px; border: 1px solid #bbb; border-right-color: #777; border-bottom-color: #777; }

.selectbar { display: flex; align-items: center; height: 16px; padding-top: 1px; }
.selectbar button { width: 13px; height: 12px; }
.selectbar svg { width: 10px; height: 10px; }
.grip { width: 1px; height: 8px; margin: 0 2px; border-left: 1px dotted #888; }
.on { background: #fbdf92; border: 1px solid #e5ad3c; }
.selectbar .hexa { width: 18px; }
.pick { position: relative; display: flex; align-items: center; background: #fff; border: 1px solid #d2d6da; height: 11px; }
.pick select { appearance: none; width: 100%; height: 100%; padding: 0 8px 0 1px; outline: 0; color: #222; opacity: 1; }
.pick::after { content: ""; position: absolute; right: 3px; width: 4px; height: 2px; background: #555; clip-path: polygon(0 0, 100% 0, 50% 100%); pointer-events: none; }
.all { width: 52px; }
.scope { width: 71px; }
.normal { width: 53px; background: #edeff1; }
.normal select { color: #888; }
.snaps { display: flex; }
.snaps svg { fill: none; stroke: #a5a8ab; }
.snaps .solid { fill: #a5a8ab; }

.workspace { flex: 1; display: flex; min-height: 0; }
.manager { width: 189px; display: flex; flex-direction: column; }
.panelhead { height: 13px; display: flex; align-items: center; padding-left: 3px; }
.panelhead h2 { flex: 1; }
.panelhead button { width: 10px; }
.panelhead svg { width: 7px; height: 7px; }
.panelbody { flex: 1; display: flex; }
.rail { flex: none; width: 18px; display: flex; flex-direction: column; }
.rail button { height: 25px; }
.rail svg { width: 14px; height: 14px; }
.rail .current { background: #f8f9fa; }
.panel { flex: 1; min-width: 0; display: flex; flex-direction: column; border: 1px solid #c5cacf; border-top: 0; background: #fff; color: #222; }
.filterrow { display: flex; height: 13px; background: #e0e4e8; gap: 1px; padding-bottom: 1px; }
.filterrow .pick { width: 78px; height: 12px; }
.filterrow input { flex: 1; min-width: 0; background: #fff; border: 1px solid #d2d6da; }
.filterrow button { width: 12px; }
.filterrow svg { width: 10px; height: 10px; }
.treehead { height: 13px; display: flex; align-items: center; background: #eff2f5; border: solid #d5dade; border-width: 1px 0; }
.treehead span { width: 123px; padding-left: 2px; line-height: 11px; border-right: 1px solid #d5dade; }
.tree { flex: 1; display: flex; flex-direction: column; background: linear-gradient(#e8ebed, #e8ebed) 122px 0 / 1px 100% no-repeat; }
.tree li { flex: 1; display: flex; align-items: center; gap: 2px; white-space: nowrap; }
.tree li:nth-child(even) { background: rgba(0, 0, 0, .04); }
.tree svg { width: 8px; height: 8px; }
.tree .l0 { padding-left: 1px; }
.tree .l1 { padding-left: 8px; }
.tree .l2 { padding-left: 23px; }
.tree .l2 svg + svg { margin-left: 1px; }
.tree .stop { color: #e0262c; }
.twist { width: 4px; height: 4px; margin: 0 2px 2px 1px; border: solid #444; border-width: 0 1px 1px 0; rotate: 45deg; }
.replay { height: 14px; justify-content: flex-start; gap: 3px; padding-left: 2px; font-weight: 700; color: #444; border-top: 2px solid #d0d5da; }
.replay svg { width: 6px; height: 6px; }

.document { flex: 1; min-width: 0; margin-left: 4px; display: flex; flex-direction: column; }
.doctabs { display: flex; height: 13px; align-items: stretch; padding-top: 1px; }
.doctab { width: 61px; gap: 4px; background: #fcfcfc; border: 1px solid #d2d6da; border-bottom: 0; color: #222; }
.doctab svg, .newtab svg { width: 5px; height: 5px; }
.newtab { width: 16px; }
.more { margin-left: auto; width: 12px; }
.more svg { width: 6px; height: 6px; }
.viewport { flex: 1; position: relative; min-height: 0; background: linear-gradient(#fdfdfd, #9b9b9b); display: flex; flex-direction: column; align-items: center; border-right: 1px solid #e0e4e8; }
.scene { position: absolute; inset: 0; width: 100%; height: 100%; }
.axis { font: 8px "Liberation Sans", Arial, sans-serif; }
.hint { position: absolute; left: 10px; top: 3px; color: #111; }
.viewtools { position: relative; display: flex; align-items: center; height: 13px; }
.viewtools button { width: 13px; }
.viewtools svg { width: 10px; height: 10px; }
.viewtools .caret { margin-right: 3px; }
.layer { display: flex; align-items: center; width: 60px; height: 12px; gap: 1px; padding-left: 1px; background: #fdfdfd; border: 1px solid #d2d6da; }
.layer svg { width: 8px; height: 8px; }
.layer .pick { flex: 1; border: 0; height: 10px; background: none; }
.measure { position: absolute; left: 2px; bottom: 0; font-size: 8px; line-height: 10px; color: #111; }

.status { height: 16px; display: flex; align-items: center; border-top: 1px solid #cdd2d6; }
.status span { flex: 1; padding-left: 3px; line-height: 14px; }
.status button { width: 12px; height: 12px; margin-right: 4px; }
.status svg { width: 10px; height: 10px; }
.status input { width: 187px; height: 11px; background: #fff; border: 1px solid #d2d6da; border-right: 0; }
```
